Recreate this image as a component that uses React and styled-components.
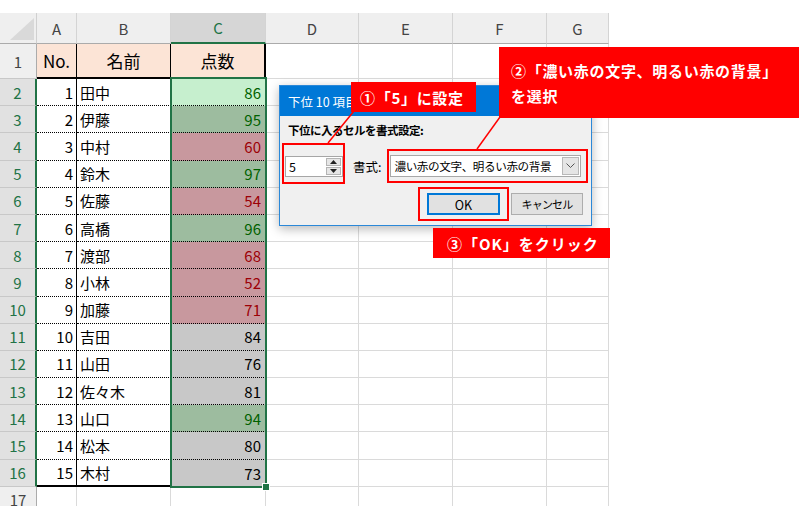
import React from 'react';
import styled, { createGlobalStyle } from 'styled-components';

const GREEN = '#217346';
const RED = '#ff0000';

const GlobalStyle = createGlobalStyle`
  html, body { margin: 0; padding: 0; background: #fff; }
  body { font-family: "Noto Sans CJK JP", "Liberation Sans", sans-serif; }
  * { box-sizing: border-box; }
`;

const Page = styled.div`
  position: relative;
  width: 802px;
  height: 506px;
  overflow: hidden;
  background: #fff;
  padding-top: 13px;
`;

const Sheet = styled.div`
  display: grid;
  grid-template-columns: 37px 40px 94px 95px 93px 94px 94px 62px;
  grid-template-rows: 31px 35px repeat(16, 27.2px);
  width: 609px;
  font-size: 15px;
  color: #000;
`;

const Corner = styled.div`
  background: #efefef;
  border-right: 1px solid #d0d0d0;
  border-bottom: 1px solid #ababab;
`;

const ColHead = styled.div`
  display: flex;
  align-items: center;
  justify-content: center;
  background: ${(p) => (p.$active ? '#d6d6d6' : '#efefef')};
  color: ${(p) => (p.$active ? GREEN : '#444')};
  border-right: 1px solid #d4d4d4;
  border-bottom: ${(p) => (p.$active ? `2px solid ${GREEN}` : '1px solid #ababab')};
  font-size: 15px;
`;

const RowHead = styled.div`
  display: flex;
  align-items: center;
  justify-content: center;
  background: ${(p) => (p.$active ? '#e1e1e1' : '#efefef')};
  color: ${(p) => (p.$active ? GREEN : '#444')};
  border-bottom: 1px solid #c8c8c8;
  border-right: ${(p) => (p.$active ? `2px solid ${GREEN}` : '1px solid #ababab')};
  font-size: 15px;
`;

const GridCell = styled.div`
  border-right: 1px solid #dadada;
  border-bottom: 1px solid #dadada;
`;

const TitleCell = styled.div`
  display: flex;
  align-items: center;
  justify-content: center;
  background: #fce4d6;
  border-right: ${(p) => (p.$edge ? '2px' : '1px')} solid #000;
  border-bottom: 2px solid #000;
  font-size: 17px;
`;

const DataCell = styled.div`
  display: flex;
  align-items: center;
  justify-content: ${(p) => (p.$right ? 'flex-end' : 'flex-start')};
  padding: 0 3px;
  border-right: 1px solid #000;
  border-bottom: ${(p) => (p.$last ? '2px solid #000' : '1px dotted #000')};
`;

const tones = {
  active: ['#c6efce', '#006100'],
  g: ['#9dbc9f', '#006100'],
  r: ['#c8989e', '#9c0006'],
  n: ['#c8c8c8', '#000'],
};

const ScoreCell = styled.div`
  display: flex;
  align-items: center;
  justify-content: flex-end;
  padding-right: 5px;
  background: ${(p) => tones[p.$tone][0]};
  color: ${(p) => tones[p.$tone][1]};
  border-bottom: ${(p) => (p.$last ? 'none' : '1px dotted #000')};
`;

const Selection = styled.div`
  position: absolute;
  left: 170px;
  top: 77px;
  width: 97px;
  height: 411px;
  border: 2px solid ${GREEN};
  pointer-events: none;
`;

const FillHandle = styled.div`
  position: absolute;
  left: 263px;
  top: 484px;
  width: 6px;
  height: 6px;
  background: ${GREEN};
  outline: 1px solid #fff;
`;

const Dialog = styled.div`
  position: absolute;
  left: 279px;
  top: 85px;
  width: 313px;
  height: 141px;
  background: #f0f0f0;
  border: 1px solid #2b88d8;
  box-shadow: 0 3px 10px rgba(0, 0, 0, 0.28);
  color: #000;
`;

const TitleBar = styled.div`
  height: 30px;
  background: #0078d7;
  color: #fff;
  font-size: 12.5px;
  padding-left: 8px;
  display: flex;
  align-items: center;
`;

const DialogBody = styled.div`
  display: flex;
  flex-direction: column;
  padding: 6px 7px 0 5px;
`;

const Prompt = styled.div`
  font-size: 11.5px;
  font-weight: 700;
  letter-spacing: -0.5px;
  line-height: 16px;
  padding-left: 3px;
`;

const FieldRow = styled.div`
  display: flex;
  align-items: center;
  height: 22px;
  margin-top: 17px;
`;

const Spinner = styled.div`
  display: flex;
  width: 58px;
  height: 21px;
  background: #fff;
  border: 1px solid #a6a6a6;
`;

const SpinValue = styled.div`
  flex: 1;
  font-size: 12.5px;
  line-height: 19px;
  padding-left: 3px;
`;

const SpinButtons = styled.div`
  display: flex;
  flex-direction: column;
  width: 16px;
  padding: 1px 1px 1px 0;
  gap: 1px;
`;

const SpinBtn = styled.div`
  flex: 1;
  display: flex;
  align-items: center;
  justify-content: center;
  background: #e6e6e6;
  border: 1px solid #b4b4b4;
`;

const FieldLabel = styled.div`
  font-size: 12.5px;
  margin-left: 10px;
`;

const Combo = styled.div`
  display: flex;
  align-items: center;
  width: 191px;
  height: 22px;
  margin-left: 9px;
  padding-left: 3px;
  background: #fff;
  border: 1px solid #a8a8a8;
`;

const ComboText = styled.div`
  flex: 1;
  font-size: 11.6px;
  letter-spacing: -0.4px;
  white-space: nowrap;
`;

const ComboDrop = styled.div`
  width: 17px;
  height: 18px;
  margin-right: 1px;
  display: flex;
  align-items: center;
  justify-content: center;
  background: #e5e5e5;
  border: 1px solid #b8b8b8;
`;

const ButtonRow = styled.div`
  display: flex;
  justify-content: flex-end;
  gap: 11px;
  margin-top: 16px;
  padding-right: 1px;
`;

const Button = styled.div`
  width: ${(p) => p.$w}px;
  height: 22px;
  display: flex;
  align-items: center;
  justify-content: center;
  background: #e1e1e1;
  border: ${(p) => (p.$default ? '2px solid #0078d7' : '1px solid #adadad')};
  font-size: ${(p) => (p.$default ? '12.5px' : '11px')};
  letter-spacing: ${(p) => (p.$default ? '0' : '-0.8px')};
`;

const Marker = styled.div`
  position: absolute;
  left: ${(p) => p.$x}px;
  top: ${(p) => p.$y}px;
  width: ${(p) => p.$w}px;
  height: ${(p) => p.$h}px;
  border: 2px solid ${RED};
`;

const Callout = styled.div`
  position: absolute;
  left: ${(p) => p.$x}px;
  top: ${(p) => p.$y}px;
  width: ${(p) => p.$w}px;
  height: ${(p) => p.$h}px;
  padding-left: ${(p) => p.$pad}px;
  display: flex;
  flex-direction: column;
  justify-content: center;
  background: ${RED};
  color: #fff;
  font-weight: 700;
  font-size: 15px;
  line-height: 25px;
  letter-spacing: ${(p) => p.$ls || 0.7}px;
  white-space: nowrap;
`;

const Leaders = styled.svg`
  position: absolute;
  left: 0;
  top: 0;
  pointer-events: none;
`;

const COLS = ['A', 'B', 'C', 'D', 'E', 'F', 'G'];

const rows = [
  [1, '田中', 86, 'active'],
  [2, '伊藤', 95, 'g'],
  [3, '中村', 60, 'r'],
  [4, '鈴木', 97, 'g'],
  [5, '佐藤', 54, 'r'],
  [6, '高橋', 96, 'g'],
  [7, '渡部', 68, 'r'],
  [8, '小林', 52, 'r'],
  [9, '加藤', 71, 'r'],
  [10, '吉田', 84, 'n'],
  [11, '山田', 76, 'n'],
  [12, '佐々木', 81, 'n'],
  [13, '山口', 94, 'g'],
  [14, '松本', 80, 'n'],
  [15, '木村', 73, 'n'],
];

function Empty({ n }) {
  return Array.from({ length: n }, (_, i) => <GridCell key={i} />);
}

export default function App() {
  return (
    <Page>
      <GlobalStyle />
      <Sheet>
        <Corner>
          <svg width="37" height="31">
            <polygon points="34,5 34,27 10,27" fill="#d9d9d9" />
          </svg>
        </Corner>
        {COLS.map((c) => (
          <ColHead key={c} $active={c === 'C'}>{c}</ColHead>
        ))}

        <RowHead>1</RowHead>
        <TitleCell>No.</TitleCell>
        <TitleCell>名前</TitleCell>
        <TitleCell $edge>点数</TitleCell>
        <Empty n={4} />

        {rows.map(([no, name, score, tone], i) => {
          const last = i === rows.length - 1;
          return (
            <React.Fragment key={no}>
              <RowHead $active>{i + 2}</RowHead>
              <DataCell $right $last={last}>{no}</DataCell>
              <DataCell $last={last}>{name}</DataCell>
              <ScoreCell $tone={tone} $last={last}>{score}</ScoreCell>
              <Empty n={4} />
            </React.Fragment>
          );
        })}

        <RowHead>17</RowHead>
        <Empty n={7} />
      </Sheet>

      <Selection />
      <FillHandle />

      <Dialog>
        <TitleBar>下位 10 項目</TitleBar>
        <DialogBody>
          <Prompt>下位に入るセルを書式設定:</Prompt>
          <FieldRow>
            <Spinner>
              <SpinValue>5</SpinValue>
              <SpinButtons>
                <SpinBtn>
                  <svg width="7" height="4"><polygon points="3.5,0 7,4 0,4" fill="#222" /></svg>
                </SpinBtn>
                <SpinBtn>
                  <svg width="7" height="4"><polygon points="0,0 7,0 3.5,4" fill="#222" /></svg>
                </SpinBtn>
              </SpinButtons>
            </Spinner>
            <FieldLabel>書式:</FieldLabel>
            <Combo>
              <ComboText>濃い赤の文字、明るい赤の背景</ComboText>
              <ComboDrop>
                <svg width="9" height="6">
                  <polyline points="0.5,0.5 4.5,4.5 8.5,0.5" fill="none" stroke="#555" strokeWidth="1" />
                </svg>
              </ComboDrop>
            </Combo>
          </FieldRow>
          <ButtonRow>
            <Button $w={73} $default>OK</Button>
            <Button $w={72}>キャンセル</Button>
          </ButtonRow>
        </DialogBody>
      </Dialog>

      <Marker $x={282} $y={143} $w={63} $h={41} />
      <Marker $x={387} $y={149} $w={201} $h={34} />
      <Marker $x={418} $y={187} $w={91} $h={34} />

      <Leaders width="802" height="506">
        <line x1="354" y1="111" x2="328" y2="143" stroke={RED} strokeWidth="1.5" />
        <line x1="500" y1="117" x2="477" y2="149" stroke={RED} strokeWidth="1.5" />
      </Leaders>

      <Callout $x={351} $y={82} $w={125} $h={30} $pad={9}>①「5」に設定</Callout>
      <Callout $x={499} $y={47} $w={300} $h={71} $pad={12}>
        <span>②「濃い赤の文字、明るい赤の背景」</span>
        <span>を選択</span>
      </Callout>
      <Callout $x={433} $y={228} $w={177} $h={30} $pad={14} $ls={1}>③「OK」をクリック</Callout>
    </Page>
  );
}
